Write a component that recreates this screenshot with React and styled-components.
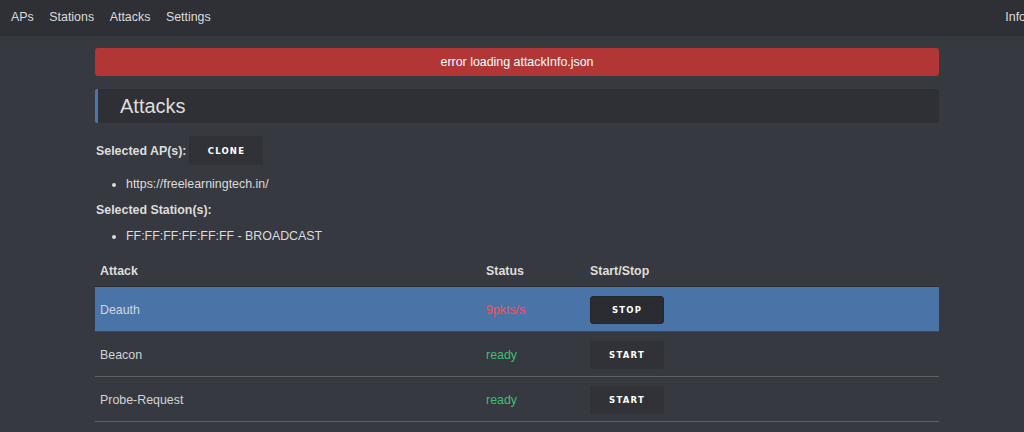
import React from "react";
import styled, { createGlobalStyle } from "styled-components";

const Global = createGlobalStyle`
  html, body { margin: 0; padding: 0; background: #36393f; }
  body { font-family: "Liberation Sans", Arial, sans-serif; font-size: 12.4px; color: #dcdcdc; overflow: hidden; }
`;

const Nav = styled.nav`
  height: 36px;
  background: #2f3035;
  display: flex;
  align-items: center;
  padding-left: 11px;
`;

const NavLink = styled.a`
  color: #dcdcdc;
  font-size: 12.4px;
  margin-right: ${(p) => (p.$last ? "0" : "15.6px")};
  margin-left: ${(p) => (p.$right ? "auto" : "0")};
  text-decoration: none;
  transform: translateY(-1px);
`;

const Main = styled.main`
  margin-left: 95px;
  width: 844px;
  padding-top: 12px;
`;

const ErrorBox = styled.div`
  height: 28px;
  background: #b23636;
  border-radius: 3px;
  color: #ffffff;
  display: flex;
  align-items: center;
  justify-content: center;
  font-size: 12.4px;
`;

const Header = styled.h1`
  margin: 13px 0 0 0;
  height: 34px;
  background: #2e3035;
  border-left: 3px solid #4a76ab;
  border-radius: 2px;
  display: flex;
  align-items: center;
  padding-left: 22px;
  font-size: 20px;
  font-weight: normal;
  color: #dedede;
  box-sizing: border-box;
`;

const Row = styled.div`
  display: flex;
  align-items: center;
  gap: 3px;
  margin-top: 13px;
  height: 29px;
`;

const Label = styled.div`
  font-weight: bold;
  font-size: 12.4px;
  color: #dedede;
  margin-top: ${(p) => p.$mt || "0"};
  padding-left: 1px;
`;

const Btn = styled.button`
  width: 74px;
  height: ${(p) => p.$h || "28px"};
  background: ${(p) => (p.$dark ? "#2a2c31" : "#303237")};
  border: ${(p) => (p.$dark ? "1px solid #25272b" : "none")};
  border-radius: 3px;
  color: #ffffff;
  font-family: "DejaVu Sans", sans-serif;
  font-weight: bold;
  font-size: 8.5px;
  letter-spacing: 1.2px;
  padding: 0;
  cursor: pointer;
`;

const List = styled.ul`
  margin: ${(p) => p.$m};
  padding-left: 31px;
  li { line-height: 16px; color: #dcdcdc; font-size: 12.4px; }
`;

const Table = styled.table`
  width: 100%;
  border-collapse: collapse;
  margin-top: 11px;
`;

const Th = styled.th`
  text-align: left;
  font-weight: bold;
  font-size: 12.4px;
  color: #dedede;
  height: 31px;
  padding: 0 5px;
  width: ${(p) => p.$w || "auto"};
  border-bottom: 1px solid #2c2e32;
`;

const Tr = styled.tr`
  background: ${(p) => (p.$active ? "#4a74a8" : "transparent")};
  td { border-bottom: 1px solid ${(p) => (p.$active ? "#3a4a5f" : "#5d6065")}; }
`;

const Td = styled.td`
  height: 43px;
  padding: 1px 5px 0 5px;
  font-size: 12.4px;
  color: ${(p) => p.$color || "#d4d4d4"};
`;

const rows = [
  { name: "Deauth", status: "9pkts/s", color: "#ff4d4d", btn: "STOP", active: true },
  { name: "Beacon", status: "ready", color: "#3fbf75", btn: "START" },
  { name: "Probe-Request", status: "ready", color: "#3fbf75", btn: "START" },
];

export default function App() {
  return (
    <>
      <Global />
      <Nav>
        <NavLink>APs</NavLink>
        <NavLink>Stations</NavLink>
        <NavLink>Attacks</NavLink>
        <NavLink $last>Settings</NavLink>
        <NavLink $right $last style={{ marginRight: "-2px" }}>Info</NavLink>
      </Nav>
      <Main>
        <ErrorBox>error loading attackInfo.json</ErrorBox>
        <Header>Attacks</Header>
        <Row>
          <Label>Selected AP(s):</Label>
          <Btn $h="29px">CLONE</Btn>
        </Row>
        <List $m="11px 0 0 0">
          <li>https://freelearningtech.in/</li>
        </List>
        <Label $mt="11px">Selected Station(s):</Label>
        <List $m="11px 0 0 0">
          <li>FF:FF:FF:FF:FF:FF - BROADCAST</li>
        </List>
        <Table>
          <thead>
            <tr>
              <Th $w="376px">Attack</Th>
              <Th $w="94px">Status</Th>
              <Th>Start/Stop</Th>
            </tr>
          </thead>
          <tbody>
            {rows.map((r) => (
              <Tr key={r.name} $active={r.active}>
                <Td $color={r.active ? "#cfd6e0" : undefined}>{r.name}</Td>
                <Td $color={r.color}>{r.status}</Td>
                <Td>
                  <Btn $dark={r.active}>{r.btn}</Btn>
                </Td>
              </Tr>
            ))}
          </tbody>
        </Table>
      </Main>
    </>
  );
}
